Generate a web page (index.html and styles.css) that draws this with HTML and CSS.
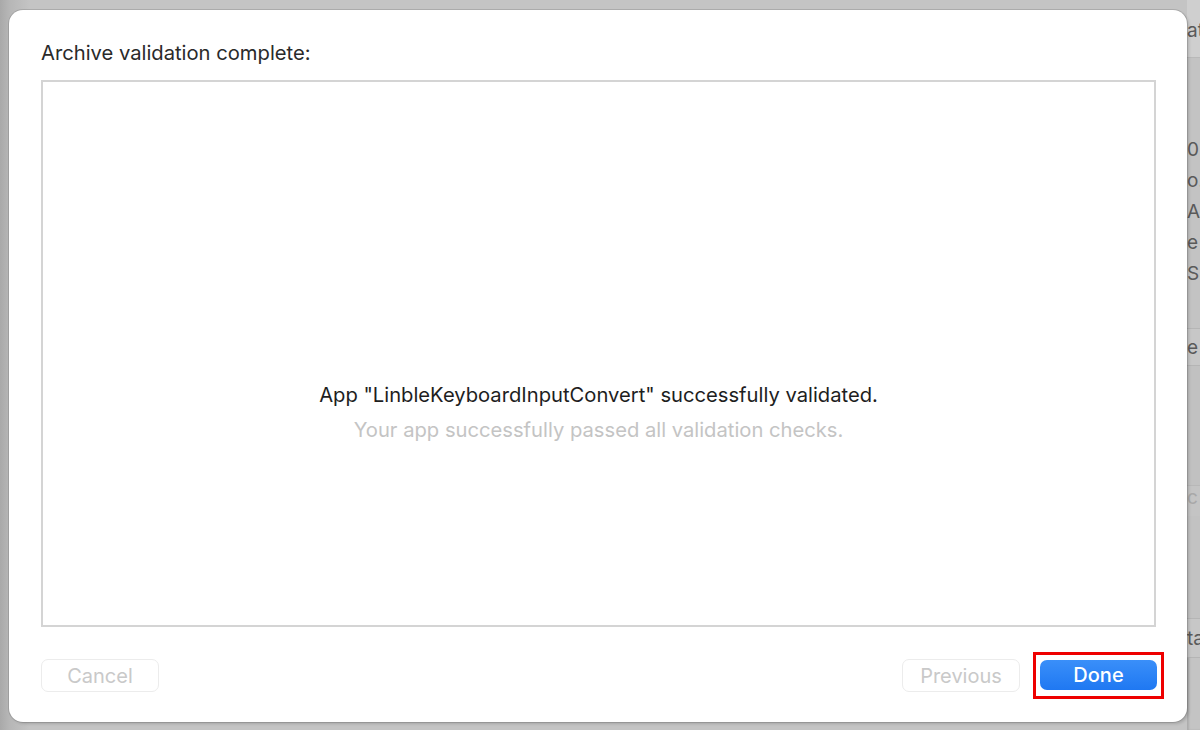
FILE: index.html
```html
<!DOCTYPE html>
<html lang="en">
<head>
  <meta charset="UTF-8">
  <title>Archive validation</title>
  <link rel="stylesheet" href="styles.css">
</head>
<body>
  <div class="desktop">
    <div class="sheet">
      <h1 class="sheet-title">Archive validation complete:</h1>

      <div class="result-box">
        <p class="result-main">App "LinbleKeyboardInputConvert" successfully validated.</p>
        <p class="result-sub">Your app successfully passed all validation checks.</p>
      </div>

      <div class="sheet-footer">
        <button class="btn" disabled>Cancel</button>
        <div class="footer-right">
          <button class="btn" disabled>Previous</button>
          <div class="highlight">
            <button class="btn btn-primary">Done</button>
          </div>
        </div>
      </div>
    </div>

    <div class="behind">
      <div class="behind-head">at</div>
      <div class="behind-list">
        <span class="row">0</span>
        <span class="row">o.i</span>
        <span class="row">A</span>
        <span class="row">e</span>
        <span class="row">S4</span>
      </div>
      <div class="behind-sep">e</div>
      <div class="behind-gap"></div>
      <div class="behind-faint">c</div>
      <div class="behind-gap2"></div>
      <div class="behind-sep last">ta</div>
    </div>
  </div>
</body>
</html>
```

FILE: styles.css
```css
* {
  box-sizing: border-box;
}

html, body {
  margin: 0;
  height: 100%;
}

body {
  font-family: Inter, 'Liberation Sans', sans-serif;
  background-color: #b3b3b3;
  color: #2b2b2b;
}

.desktop {
  display: flex;
  height: 730px;
  padding: 10px 0 8px 9px;
  background: linear-gradient(to right, #a9a9a9 0, #b6b6b6 9px, #c4c4c4 30px);
}

.sheet {
  width: 1178px;
  flex-shrink: 0;
  background-color: #fff;
  border-radius: 14px;
  box-shadow: 0 0 0 1px rgba(0,0,0,0.12), 2px 2px 3px rgba(0,0,0,0.15);
  padding: 31px 31px 0 32px;
  display: flex;
  flex-direction: column;
  position: relative;
  z-index: 1;
}

.sheet-title {
  font-size: 20.2px;
  line-height: 24px;
  font-weight: 400;
  margin: 0 0 15px;
  color: #2a2a2a;
}

.result-box {
  height: 547px;
  border: 2px solid #d4d4d4;
  display: flex;
  flex-direction: column;
  justify-content: center;
  align-items: center;
  padding-top: 116px;
}

.result-main {
  margin: 0;
  font-size: 20.2px;
  color: #1e1e1e;
}

.result-sub {
  margin: 10px 0 0;
  font-size: 20.2px;
  color: #c4c4c4;
}

.sheet-footer {
  display: flex;
  justify-content: space-between;
  align-items: center;
  margin-top: 25px;
}

.footer-right {
  display: flex;
  align-items: center;
  gap: 13px;
  margin-right: -8px;
}

.btn {
  font-family: inherit;
  width: 118px;
  height: 33px;
  font-size: 20px;
  background-color: #fff;
  color: #c9c9c9;
  border: 1.5px solid #ececec;
  border-radius: 7px;
  padding: 0;
}

.highlight {
  border: 3px solid #ee0000;
  padding: 5px 4px 6px;
}

.btn-primary {
  width: 117px;
  height: 30px;
  display: block;
  background: linear-gradient(#3a8ff9, #1f78f2);
  border: none;
  color: #fff;
  font-weight: 500;
  border-radius: 7px;
}

.behind {
  flex: 1;
  display: flex;
  flex-direction: column;
  font-size: 19px;
  color: #5a5a5a;
  overflow: hidden;
  white-space: nowrap;
  margin-top: -10px;
  margin-bottom: -8px;
  box-shadow: inset 2px 0 2px rgba(0,0,0,0.12);
}

.behind-head {
  height: 58px;
  padding-top: 19px;
  background-color: #cfcfcf;
  border-bottom: 1px solid #b9b9b9;
}

.behind-list {
  display: flex;
  flex-direction: column;
  padding-top: 76px;
  height: 270px;
  background-color: #c3c3c3;
}

.row {
  height: 31px;
  line-height: 31px;
}

.behind-sep {
  height: 38px;
  line-height: 38px;
  background-color: #c7c7c7;
  border-top: 1px solid #b5b5b5;
  border-bottom: 1px solid #b5b5b5;
}

.behind-gap {
  height: 120px;
  background-color: #c1c1c1;
  border-bottom: 1px solid #b8b8b8;
}

.behind-faint {
  height: 30px;
  color: #a9a9a9;
  background-color: #c4c4c4;
}

.behind-gap2 {
  height: 102px;
  background-color: #c2c2c2;
}

.behind-sep.last {
  height: 40px;
  line-height: 40px;
}
```
